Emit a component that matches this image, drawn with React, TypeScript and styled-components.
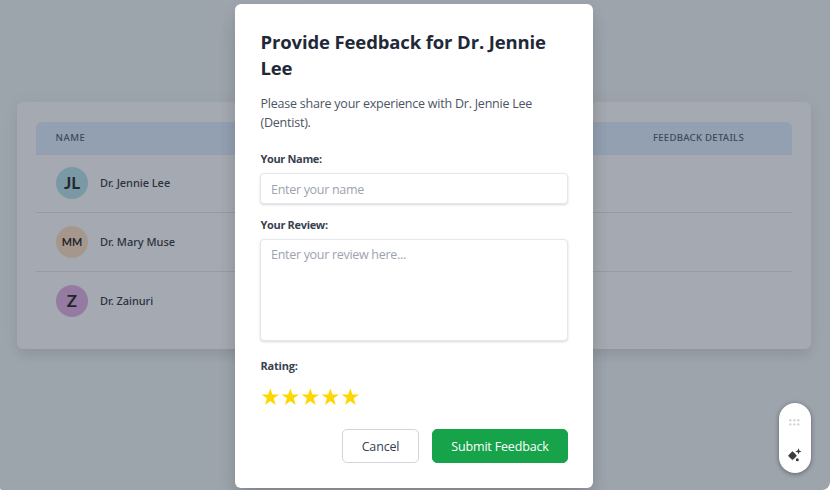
import React from "react";
import styled, { createGlobalStyle } from "styled-components";

const GlobalStyle = createGlobalStyle`
  *, *::before, *::after { box-sizing: border-box; }
  html, body { margin: 0; padding: 0; background: #fff; overflow: hidden; }
  body { font-family: "Open Sans", "Noto Sans", sans-serif; }
`;

const Page = styled.div`
  position: relative;
  width: 830px;
  height: 490px;
  padding: 102px 19px 0 17px;
  overflow: hidden;
  background: linear-gradient(90deg, #9da5ac, #9ea4ac);
  border-radius: 0 0 8px 2px;
`;

const Card = styled.main`
  height: 247px;
  padding: 20px 19px;
  border-radius: 6px;
  background: #a5a9b1;
  box-shadow: 0 8px 12px -2px rgba(0, 0, 0, 0.08), 0 0 20px rgba(0, 0, 0, 0.04);
`;

const TableHead = styled.header`
  display: flex;
  align-items: center;
  justify-content: space-between;
  height: 33px;
  padding: 0 48px 0 19.5px;
  border-radius: 6px 6px 0 0;
  border-bottom: 1px solid #979da7;
  background: #93a0b2;
  color: #404957;
`;

const HeadCell = styled.span<{ $spacing: number }>`
  font: 500 9.6px/14px "Noto Sans", sans-serif;
  letter-spacing: ${(p) => p.$spacing}px;
`;

const Row = styled.div`
  display: flex;
  align-items: center;
  gap: 12px;
  height: 59px;
  padding: 0 20px 1px;
  border-bottom: 1px solid #959ba5;
  &:first-of-type { height: 58px; }
  &:last-of-type { border-bottom-color: transparent; }
`;

const Avatar = styled.span<{ $color: string; $size: number }>`
  display: flex;
  align-items: center;
  justify-content: center;
  width: 32px;
  height: 32px;
  border-radius: 50%;
  background: ${(p) => p.$color};
  color: #24272c;
  font: 700 ${(p) => p.$size}px/18px Lato, sans-serif;
`;

const DoctorName = styled.span<{ $spacing: number }>`
  color: #2a3240;
  font: 500 11px/16px "Noto Sans", sans-serif;
  letter-spacing: ${(p) => p.$spacing}px;
`;

const Modal = styled.section`
  position: absolute;
  top: 4px;
  left: 235px;
  width: 358px;
  height: 484px;
  padding: 25px;
  border-radius: 6px;
  background: #fff;
  box-shadow: 0 16px 22px -4px rgba(0, 0, 0, 0.14), 0 4px 16px rgba(0, 0, 0, 0.08);
`;

const Title = styled.h1`
  margin: 0 0 13px;
  padding-left: 0.5px;
  color: #1f2937;
  font: 700 18.5px/26px "Open Sans", sans-serif;
  letter-spacing: -0.13px;
  white-space: nowrap;
`;

const Description = styled.p`
  margin: 0 0 18px 0.5px;
  color: #4b5563;
  font: 400 12.5px/19px "Open Sans", sans-serif;
  letter-spacing: -0.23px;
`;

const Label = styled.label<{ $spacing: number }>`
  display: block;
  height: 18px;
  margin: 0 0 5px 0.5px;
  color: #374151;
  font: 700 11px/18px "Open Sans", sans-serif;
  letter-spacing: ${(p) => p.$spacing}px;
`;

const fieldStyle = `
  display: block;
  width: 308px;
  margin: 0;
  padding: 5px 10px;
  border: 1px solid #e5e7eb;
  border-radius: 4px;
  outline: 0;
  resize: none;
  background: #fff;
  color: #374151;
  font: 400 12.5px/19px "Open Sans", sans-serif;
  box-shadow: 0 1px 3px rgba(0, 0, 0, 0.1), 0 1px 2px rgba(0, 0, 0, 0.06);
  &::placeholder { color: #9ca3af; opacity: 1; }
`;

const NameInput = styled.input`
  ${fieldStyle}
  height: 31px;
  padding: 6px 10px 4px;
  margin-bottom: 12px;
  letter-spacing: -0.3px;
`;

const ReviewInput = styled.textarea`
  ${fieldStyle}
  height: 102px;
  margin-bottom: 16px;
  letter-spacing: -0.3px;
`;

const Stars = styled.div`
  display: flex;
  height: 20px;
  margin: 12px 0 22px;
`;

const StarIcon = styled.svg`
  width: 20px;
  height: 20px;
  fill: #ffd700;
`;

const Actions = styled.div`
  display: flex;
  justify-content: flex-end;
  gap: 13px;
`;

const Button = styled.button<{ $primary?: boolean }>`
  width: ${(p) => (p.$primary ? 136 : 77)}px;
  height: 34px;
  padding: 1px 0 0;
  border: 1px solid ${(p) => (p.$primary ? "#16a34a" : "#d1d5db")};
  border-radius: 5px;
  background: ${(p) => (p.$primary ? "#16a34a" : "#fff")};
  color: ${(p) => (p.$primary ? "#fff" : "#374151")};
  font: 400 12.5px/19px "Open Sans", sans-serif;
  letter-spacing: ${(p) => (p.$primary ? -0.17 : -0.15)}px;
  white-space: nowrap;
`;

const AssistantPill = styled.aside`
  position: absolute;
  top: 403px;
  left: 779px;
  width: 32px;
  height: 70px;
  border-radius: 16px;
  background: #fff;
  box-shadow: 0 1px 5px rgba(0, 0, 0, 0.4);
  svg { display: block; }
`;

const doctors = [
  { name: "Dr. Jennie Lee", initials: "JL", color: "#7b98a5", size: 17, spacing: -0.04 },
  { name: "Dr. Mary Muse", initials: "MM", color: "#a6978d", size: 10.8, spacing: 0 },
  { name: "Dr. Zainuri", initials: "Z", color: "#957ba2", size: 17, spacing: -0.06 },
];

export default function App() {
  return (
    <>
      <GlobalStyle />
      <Page>
        <Card>
          <TableHead>
            <HeadCell $spacing={0.45}>NAME</HeadCell>
            <HeadCell $spacing={0.26}>FEEDBACK DETAILS</HeadCell>
          </TableHead>
          {doctors.map((d) => (
            <Row key={d.name}>
              <Avatar $color={d.color} $size={d.size}>{d.initials}</Avatar>
              <DoctorName $spacing={d.spacing}>{d.name}</DoctorName>
            </Row>
          ))}
        </Card>
        <Modal role="dialog" aria-labelledby="feedback-title">
          <Title id="feedback-title">Provide Feedback for Dr. Jennie<br />Lee</Title>
          <Description>Please share your experience with Dr. Jennie Lee<br />(Dentist).</Description>
          <Label htmlFor="name" $spacing={-0.35}>Your Name:</Label>
          <NameInput id="name" placeholder="Enter your name" />
          <Label htmlFor="review" $spacing={-0.33}>Your Review:</Label>
          <ReviewInput id="review" placeholder="Enter your review here..." />
          <Label as="div" $spacing={-0.2}>Rating:</Label>
          <Stars>
            {[1, 2, 3, 4, 5].map((n) => (
              <StarIcon key={n} viewBox="0 0 20 20">
                <path d="M10.3 1.3 L12.4 7.5 H19 L13.7 11.3 L15.7 18 L10.3 14 L4.9 18 L6.9 11.3 L1.6 7.5 H8.2Z" />
              </StarIcon>
            ))}
          </Stars>
          <Actions>
            <Button type="button">Cancel</Button>
            <Button type="button" $primary>Submit Feedback</Button>
          </Actions>
        </Modal>
        <AssistantPill>
          <svg width="32" height="70" viewBox="0 0 32 70">
            <g fill="#d4d4d4">
              {[11, 15, 19].map((x) => (
                <React.Fragment key={x}>
                  <circle cx={x + 0.3} cy="17.3" r="1.2" />
                  <circle cx={x + 0.3} cy="21.4" r="1.2" />
                </React.Fragment>
              ))}
            </g>
            <g fill="#3c3c3c">
              <path d="M13.5 48.6 L15.7 50.5 L17.6 52.7 L15.7 54.9 L13.5 56.8 L11.3 54.9 L9.4 52.7 L11.3 50.5Z" stroke="#3c3c3c" strokeWidth=".5" />
              <path d="M19.5 45.3 L20.3 47.6 L22.6 48.4 L20.3 49.2 L19.5 51.5 L18.7 49.2 L16.4 48.4 L18.7 47.6Z" />
              <circle cx="18.3" cy="56.7" r="1.5" />
            </g>
          </svg>
        </AssistantPill>
      </Page>
    </>
  );
}
